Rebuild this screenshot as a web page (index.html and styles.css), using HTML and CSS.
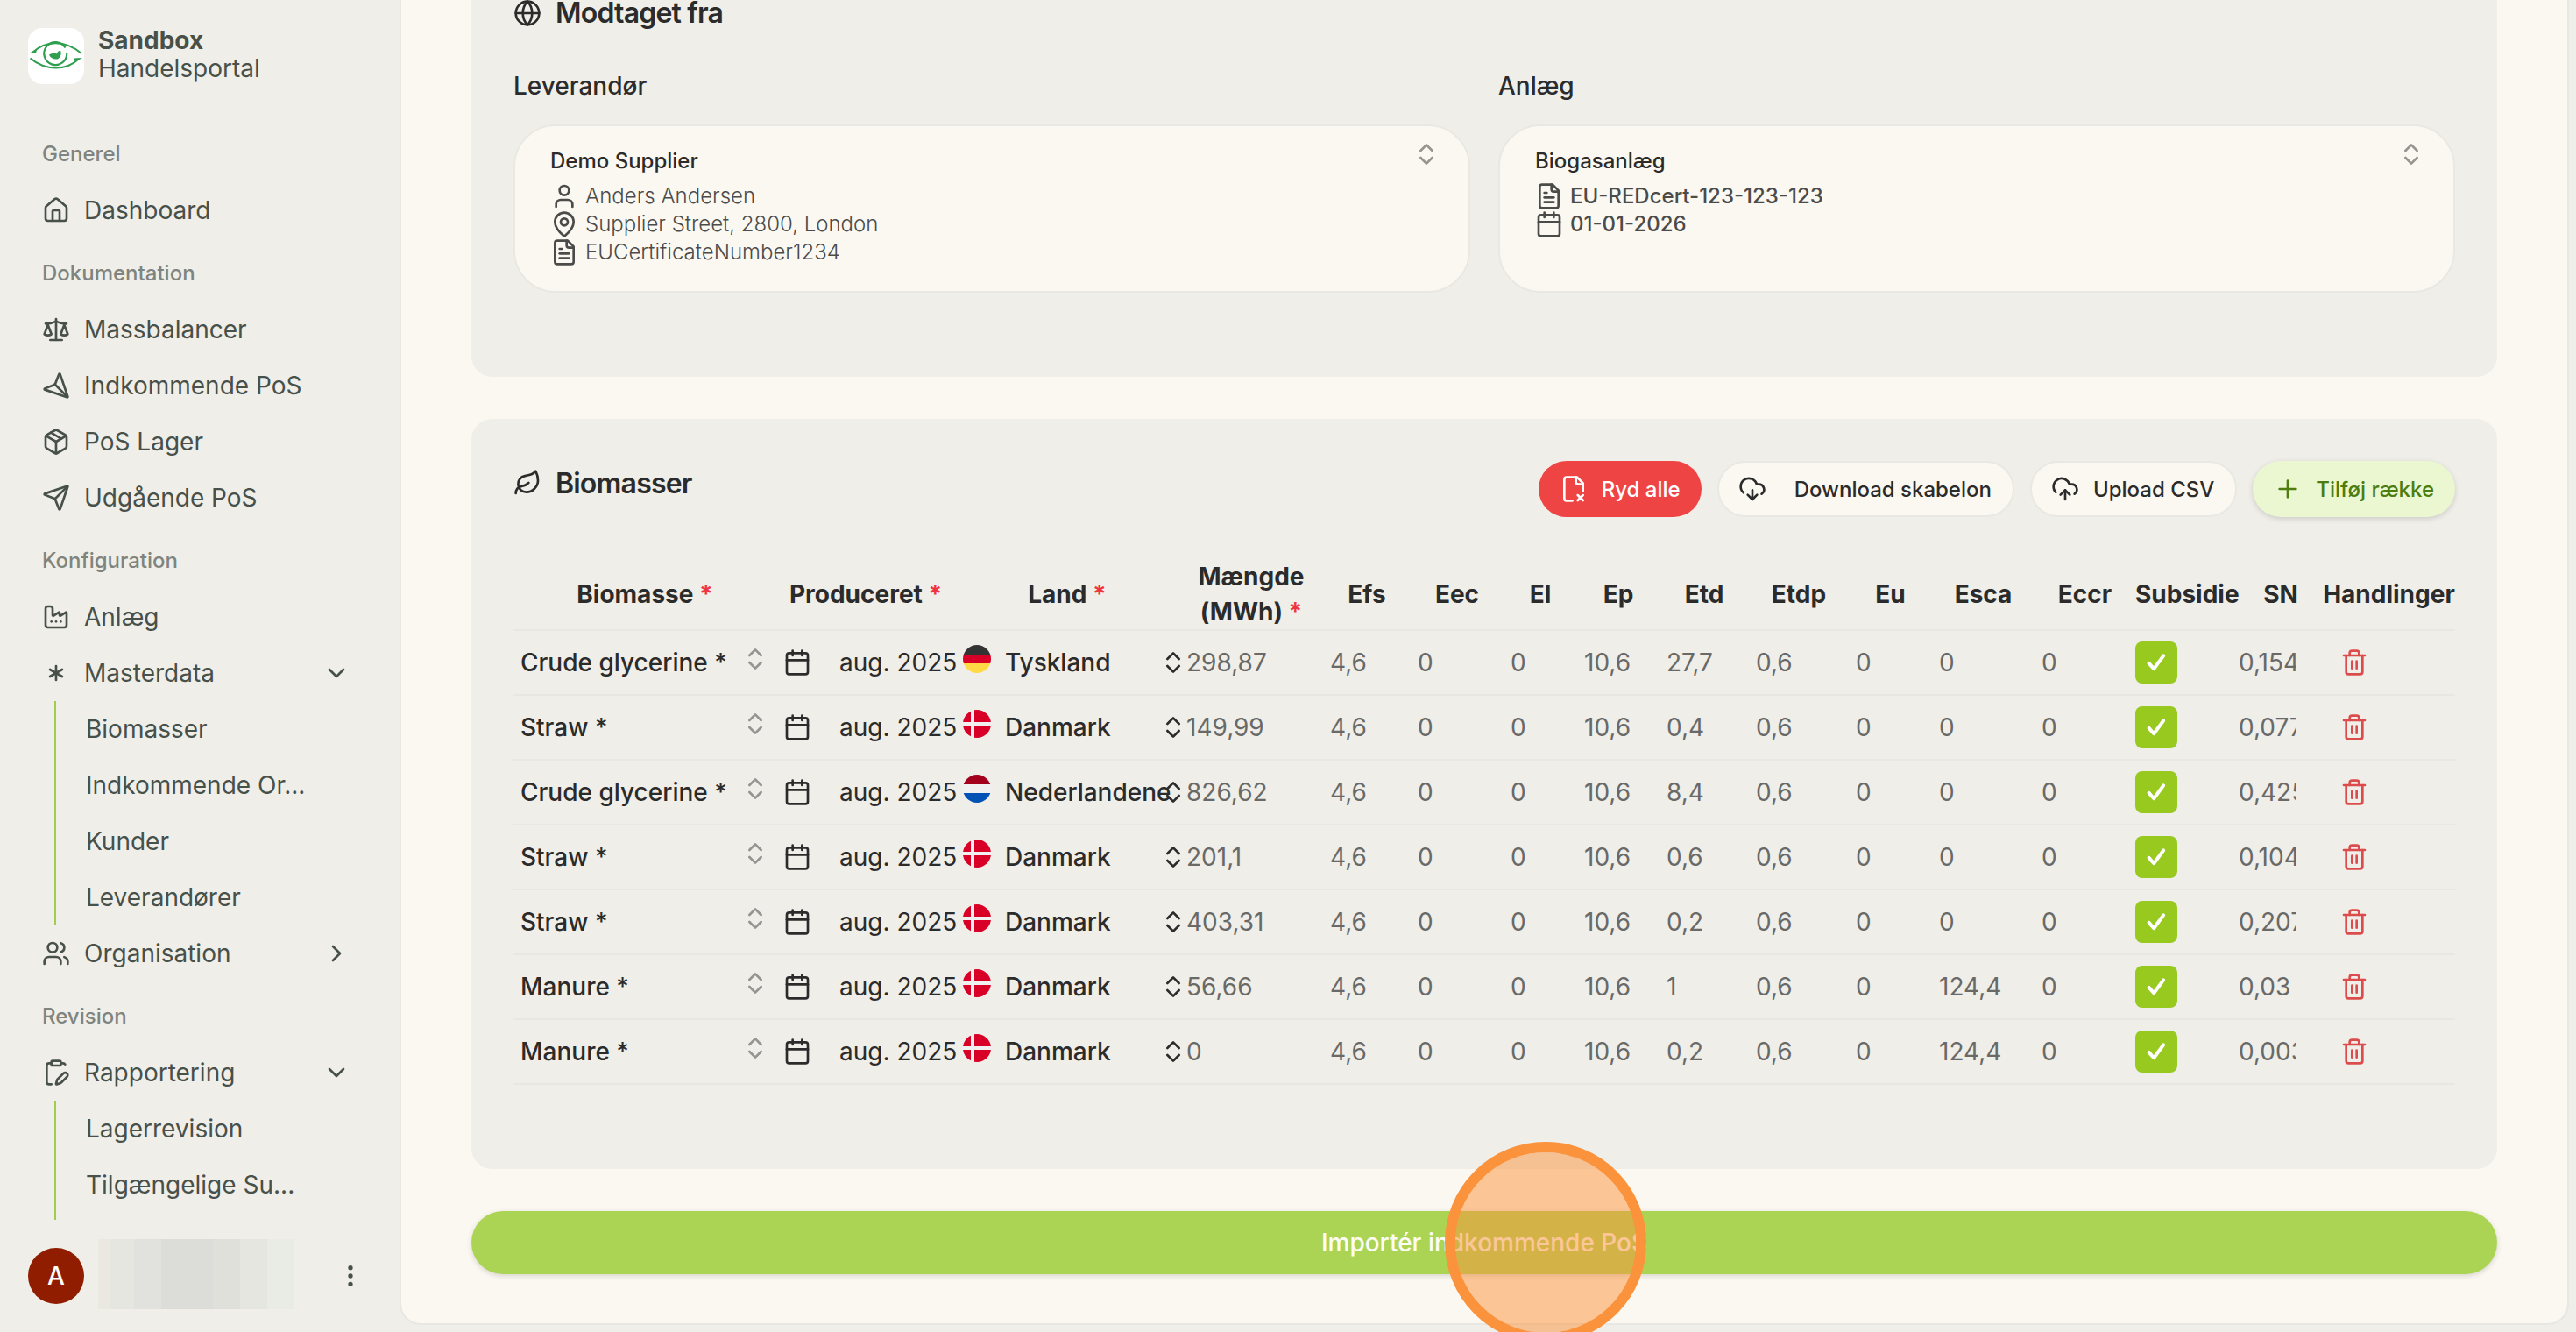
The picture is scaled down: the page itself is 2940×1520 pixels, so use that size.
FILE: index.html
```html
<!DOCTYPE html>
<html lang="da">

<head>
    <meta charset="UTF-8">
    <meta name="viewport" content="width=device-width, initial-scale=1.0">
    <title>Sandbox Handelsportal</title>
    <link rel="stylesheet" href="styles.css">
</head>

<body>
    <!-- Icon sprite -->
    <svg class="sprite">
        <symbol id="house" viewBox="0 0 24 24"><path d="M15 21v-8a1 1 0 0 0-1-1h-4a1 1 0 0 0-1 1v8"/><path d="M3 10a2 2 0 0 1 .709-1.528l7-5.999a2 2 0 0 1 2.582 0l7 5.999A2 2 0 0 1 21 10v9a2 2 0 0 1-2 2H5a2 2 0 0 1-2-2z"/></symbol>
        <symbol id="scale" viewBox="0 0 24 24"><path d="m16 16 3-8 3 8c-.87.65-1.92 1-3 1s-2.13-.35-3-1Z"/><path d="m2 16 3-8 3 8c-.87.65-1.92 1-3 1s-2.13-.35-3-1Z"/><path d="M7 21h10"/><path d="M12 3v18"/><path d="M3 7h2c2 0 5-1 7-2 2 1 5 2 7 2h2"/></symbol>
        <symbol id="send" viewBox="0 0 24 24"><path d="M14.536 21.686a.5.5 0 0 0 .937-.024l6.5-19a.496.496 0 0 0-.635-.635l-19 6.5a.5.5 0 0 0-.024.937l7.93 3.18a2 2 0 0 1 1.112 1.11z"/><path d="m21.854 2.147-10.94 10.939"/></symbol>
        <symbol id="package" viewBox="0 0 24 24"><path d="M11 21.73a2 2 0 0 0 2 0l7-4A2 2 0 0 0 21 16V8a2 2 0 0 0-1-1.73l-7-4a2 2 0 0 0-2 0l-7 4A2 2 0 0 0 3 8v8a2 2 0 0 0 1 1.73z"/><path d="M12 22V12"/><path d="M3.29 7 12 12l8.71-5"/><path d="m7.5 4.27 9 5.15"/></symbol>
        <symbol id="factory" viewBox="0 0 24 24"><path d="M12 16h.01"/><path d="M16 16h.01"/><path d="M8 16h.01"/><path d="M3 19a2 2 0 0 0 2 2h14a2 2 0 0 0 2-2V8.5a.5.5 0 0 0-.769-.422l-4.462 2.844A.5.5 0 0 1 15 10.5v-2a.5.5 0 0 0-.769-.422L9.77 10.922A.5.5 0 0 1 9 10.5V5a2 2 0 0 0-2-2H5a2 2 0 0 0-2 2z"/></symbol>
        <symbol id="asterisk" viewBox="0 0 24 24"><path d="M12 6v12"/><path d="M17.196 9 6.804 15"/><path d="m6.804 9 10.392 6"/></symbol>
        <symbol id="users" viewBox="0 0 24 24"><path d="M16 21v-2a4 4 0 0 0-4-4H6a4 4 0 0 0-4 4v2"/><circle cx="9" cy="7" r="4"/><path d="M22 21v-2a4 4 0 0 0-3-3.87"/><path d="M16 3.13a4 4 0 0 1 0 7.75"/></symbol>
        <symbol id="clipboard-pen" viewBox="0 0 24 24"><rect width="8" height="4" x="8" y="2" rx="1"/><path d="M16 4h2a2 2 0 0 1 1.73 1"/><path d="M8 4H6a2 2 0 0 0-2 2v14a2 2 0 0 0 2 2h2"/><path d="M21.34 15.664a1 1 0 1 0-3.004-3.004l-5.01 5.012a2 2 0 0 0-.506.854l-.837 2.87a.5.5 0 0 0 .62.62l2.87-.837a2 2 0 0 0 .854-.506z"/></symbol>
        <symbol id="chevron-down" viewBox="0 0 24 24"><path d="m6 9 6 6 6-6"/></symbol>
        <symbol id="chevron-right" viewBox="0 0 24 24"><path d="m9 18 6-6-6-6"/></symbol>
        <symbol id="chevrons" viewBox="0 0 24 24"><path d="m7 15 5 5 5-5"/><path d="m7 9 5-5 5 5"/></symbol>
        <symbol id="dots" viewBox="0 0 24 24"><circle cx="12" cy="12" r="1"/><circle cx="12" cy="5" r="1"/><circle cx="12" cy="19" r="1"/></symbol>
        <symbol id="globe" viewBox="0 0 24 24"><circle cx="12" cy="12" r="10"/><path d="M12 2a14.5 14.5 0 0 0 0 20 14.5 14.5 0 0 0 0-20"/><path d="M2 12h20"/></symbol>
        <symbol id="user" viewBox="0 0 24 24"><path d="M19 21v-2a4 4 0 0 0-4-4H9a4 4 0 0 0-4 4v2"/><circle cx="12" cy="7" r="4"/></symbol>
        <symbol id="pin" viewBox="0 0 24 24"><path d="M20 10c0 4.993-5.539 10.193-7.399 11.799a1 1 0 0 1-1.202 0C9.539 20.193 4 14.993 4 10a8 8 0 0 1 16 0"/><circle cx="12" cy="10" r="3"/></symbol>
        <symbol id="file-text" viewBox="0 0 24 24"><path d="M15 2H6a2 2 0 0 0-2 2v16a2 2 0 0 0 2 2h12a2 2 0 0 0 2-2V7Z"/><path d="M14 2v4a2 2 0 0 0 2 2h4"/><path d="M10 9H8"/><path d="M16 13H8"/><path d="M16 17H8"/></symbol>
        <symbol id="calendar" viewBox="0 0 24 24"><path d="M8 2v4"/><path d="M16 2v4"/><rect width="18" height="18" x="3" y="4" rx="2"/><path d="M3 10h18"/></symbol>
        <symbol id="leaf" viewBox="0 0 24 24"><path d="M11 20A7 7 0 0 1 9.8 6.1C15.5 5 17 4.48 19 2c1 2 2 4.18 2 8 0 5.5-4.78 10-10 10Z"/><path d="M2 21c0-3 1.85-5.36 5.08-6C9.5 14.52 12 13 13 12"/></symbol>
        <symbol id="file-x" viewBox="0 0 24 24"><path d="M11 22H6a2 2 0 0 1-2-2V4a2 2 0 0 1 2-2h9l5 5v7"/><path d="M14 2v4a2 2 0 0 0 2 2h4"/><path d="m15.5 17.3 4.5 4.5"/><path d="m20 17.3-4.5 4.5"/></symbol>
        <symbol id="cloud-down" viewBox="0 0 24 24"><path d="M12 13v8l-4-4"/><path d="m12 21 4-4"/><path d="M4.393 15.269A7 7 0 1 1 15.71 8h1.79a4.5 4.5 0 0 1 2.436 8.284"/></symbol>
        <symbol id="cloud-up" viewBox="0 0 24 24"><path d="M12 13v8"/><path d="M4 14.899A7 7 0 1 1 15.71 8h1.79a4.5 4.5 0 0 1 2.5 8.242"/><path d="m8 17 4-4 4 4"/></symbol>
        <symbol id="plus" viewBox="0 0 24 24"><path d="M5 12h14"/><path d="M12 5v14"/></symbol>
        <symbol id="check" viewBox="0 0 24 24"><path d="m4.8 12.8 4.8 5.4L19 5.4"/></symbol>
        <symbol id="trash" viewBox="0 0 24 24"><path d="M3 6h18"/><path d="M19 6v14a2 2 0 0 1-2 2H7a2 2 0 0 1-2-2V6"/><path d="M8 6V4a2 2 0 0 1 2-2h4a2 2 0 0 1 2 2v2"/><path d="M10 11v6"/><path d="M14 11v6"/></symbol>
    </svg>

    <div class="app">
        <aside class="sidebar">
            <div class="brand">
                <svg class="logo" viewBox="0 0 64 64">
                    <path class="stroke" d="M5 28C20 14 42 13 61 29"/>
                    <path class="fill" d="M1.5 28.5 10 24.5 9 29Z"/>
                    <path class="stroke" d="M2.5 34.5C20 49 44 49 58 35"/>
                    <path class="fill" d="M52 34.5 62 34 54 38.5Z"/>
                    <path class="stroke" d="M42.5 22.5A13 13 0 1 0 44.3 29"/>
                    <path class="fill" d="M24 30.5C27 28.5 31 28 32.5 29.5 33.5 27 35 26 37 25.5 38.5 29 37.5 34 33.5 35.5 29.5 36 25.5 34.5 24 30.5Z"/>
                </svg>
                <div class="brand-text">
                    <strong>Sandbox</strong>
                    <span>Handelsportal</span>
                </div>
            </div>

            <nav class="nav">
                <div class="nav-group">
                    <h4>Generel</h4>
                    <a class="nav-item"><svg class="icon"><use href="#house"/></svg>Dashboard</a>
                </div>
                <div class="nav-group">
                    <h4>Dokumentation</h4>
                    <a class="nav-item"><svg class="icon"><use href="#scale"/></svg>Massbalancer</a>
                    <a class="nav-item"><svg class="icon incoming"><use href="#send"/></svg>Indkommende PoS</a>
                    <a class="nav-item"><svg class="icon"><use href="#package"/></svg>PoS Lager</a>
                    <a class="nav-item"><svg class="icon"><use href="#send"/></svg>Udgående PoS</a>
                </div>
                <div class="nav-group">
                    <h4>Konfiguration</h4>
                    <a class="nav-item"><svg class="icon"><use href="#factory"/></svg>Anlæg</a>
                    <a class="nav-item"><svg class="icon"><use href="#asterisk"/></svg>Masterdata<svg class="icon toggle"><use href="#chevron-down"/></svg></a>
                    <div class="nav-sub">
                        <a>Biomasser</a>
                        <a>Indkommende Or...</a>
                        <a>Kunder</a>
                        <a>Leverandører</a>
                    </div>
                    <a class="nav-item"><svg class="icon"><use href="#users"/></svg>Organisation<svg class="icon toggle"><use href="#chevron-right"/></svg></a>
                </div>
                <div class="nav-group">
                    <h4>Revision</h4>
                    <a class="nav-item"><svg class="icon"><use href="#clipboard-pen"/></svg>Rapportering<svg class="icon toggle"><use href="#chevron-down"/></svg></a>
                    <div class="nav-sub last">
                        <a>Lagerrevision</a>
                        <a>Tilgængelige Su...</a>
                    </div>
                </div>
            </nav>

            <div class="account">
                <div class="avatar">A</div>
                <div class="account-name"><i></i><i></i><i></i><i></i><i></i><i></i><i></i></div>
                <svg class="icon"><use href="#dots"/></svg>
            </div>
        </aside>

        <main class="main">
            <section class="card received">
                <h2><svg class="icon"><use href="#globe"/></svg>Modtaget fra</h2>
                <div class="fields">
                    <div class="field">
                        <label>Leverandør</label>
                        <div class="select-box">
                            <b>Demo Supplier</b>
                            <p><svg class="icon"><use href="#user"/></svg>Anders Andersen</p>
                            <p><svg class="icon"><use href="#pin"/></svg>Supplier Street, 2800, London</p>
                            <p><svg class="icon"><use href="#file-text"/></svg>EUCertificateNumber1234</p>
                            <svg class="icon select-arrow"><use href="#chevrons"/></svg>
                        </div>
                    </div>
                    <div class="field">
                        <label>Anlæg</label>
                        <div class="select-box plant">
                            <b>Biogasanlæg</b>
                            <p><svg class="icon"><use href="#file-text"/></svg>EU-REDcert-123-123-123</p>
                            <p><svg class="icon"><use href="#calendar"/></svg>01-01-2026</p>
                            <svg class="icon select-arrow"><use href="#chevrons"/></svg>
                        </div>
                    </div>
                </div>
            </section>

            <section class="card biomass">
                <div class="card-head">
                    <h2><svg class="icon"><use href="#leaf"/></svg>Biomasser</h2>
                    <div class="actions">
                        <button class="btn danger"><svg class="icon"><use href="#file-x"/></svg>Ryd alle</button>
                        <button class="btn outline wide"><svg class="icon"><use href="#cloud-down"/></svg>Download skabelon</button>
                        <button class="btn outline"><svg class="icon"><use href="#cloud-up"/></svg>Upload CSV</button>
                        <button class="btn add"><svg class="icon"><use href="#plus"/></svg>Tilføj række</button>
                    </div>
                </div>

                <table>
                    <colgroup>
                        <col class="c-biomass"><col class="c-date"><col class="c-country"><col class="c-amount">
                        <col class="c-efs"><col class="c-eec"><col class="c-el"><col class="c-ep"><col class="c-etd"><col class="c-etdp">
                        <col class="c-eu"><col class="c-esca"><col class="c-eccr"><col class="c-sub"><col class="c-sn"><col class="c-act">
                    </colgroup>
                    <thead>
                        <tr>
                            <th>Biomasse <em>*</em></th>
                            <th>Produceret <em>*</em></th>
                            <th>Land <em>*</em></th>
                            <th>Mængde (MWh) <em>*</em></th>
                            <th>Efs</th>
                            <th>Eec</th>
                            <th>El</th>
                            <th>Ep</th>
                            <th>Etd</th>
                            <th>Etdp</th>
                            <th>Eu</th>
                            <th>Esca</th>
                            <th>Eccr</th>
                            <th>Subsidie</th>
                            <th>SN</th>
                            <th>Handlinger</th>
                        </tr>
                    </thead>
                    <tbody>
                        <tr>
                            <td><div class="pick">Crude glycerine *<svg class="icon"><use href="#chevrons"/></svg></div></td>
                            <td><div class="date"><svg class="icon"><use href="#calendar"/></svg>aug. 2025</div></td>
                            <td><div class="country"><i class="flag de"></i><span>Tyskland</span><svg class="icon"><use href="#chevrons"/></svg></div></td>
                            <td>298,87</td><td>4,6</td><td>0</td><td>0</td><td>10,6</td><td>27,7</td><td>0,6</td><td>0</td><td>0</td><td>0</td>
                            <td><span class="checkbox"><svg class="icon"><use href="#check"/></svg></span></td>
                            <td><div class="sn">0,154</div></td>
                            <td><svg class="icon trash"><use href="#trash"/></svg></td>
                        </tr>
                        <tr>
                            <td><div class="pick">Straw *<svg class="icon"><use href="#chevrons"/></svg></div></td>
                            <td><div class="date"><svg class="icon"><use href="#calendar"/></svg>aug. 2025</div></td>
                            <td><div class="country"><i class="flag dk"></i><span>Danmark</span><svg class="icon"><use href="#chevrons"/></svg></div></td>
                            <td>149,99</td><td>4,6</td><td>0</td><td>0</td><td>10,6</td><td>0,4</td><td>0,6</td><td>0</td><td>0</td><td>0</td>
                            <td><span class="checkbox"><svg class="icon"><use href="#check"/></svg></span></td>
                            <td><div class="sn">0,077</div></td>
                            <td><svg class="icon trash"><use href="#trash"/></svg></td>
                        </tr>
                        <tr>
                            <td><div class="pick">Crude glycerine *<svg class="icon"><use href="#chevrons"/></svg></div></td>
                            <td><div class="date"><svg class="icon"><use href="#calendar"/></svg>aug. 2025</div></td>
                            <td><div class="country"><i class="flag nl"></i><span>Nederlandene</span><svg class="icon"><use href="#chevrons"/></svg></div></td>
                            <td>826,62</td><td>4,6</td><td>0</td><td>0</td><td>10,6</td><td>8,4</td><td>0,6</td><td>0</td><td>0</td><td>0</td>
                            <td><span class="checkbox"><svg class="icon"><use href="#check"/></svg></span></td>
                            <td><div class="sn">0,425</div></td>
                            <td><svg class="icon trash"><use href="#trash"/></svg></td>
                        </tr>
                        <tr>
                            <td><div class="pick">Straw *<svg class="icon"><use href="#chevrons"/></svg></div></td>
                            <td><div class="date"><svg class="icon"><use href="#calendar"/></svg>aug. 2025</div></td>
                            <td><div class="country"><i class="flag dk"></i><span>Danmark</span><svg class="icon"><use href="#chevrons"/></svg></div></td>
                            <td>201,1</td><td>4,6</td><td>0</td><td>0</td><td>10,6</td><td>0,6</td><td>0,6</td><td>0</td><td>0</td><td>0</td>
                            <td><span class="checkbox"><svg class="icon"><use href="#check"/></svg></span></td>
                            <td><div class="sn">0,104</div></td>
                            <td><svg class="icon trash"><use href="#trash"/></svg></td>
                        </tr>
                        <tr>
                            <td><div class="pick">Straw *<svg class="icon"><use href="#chevrons"/></svg></div></td>
                            <td><div class="date"><svg class="icon"><use href="#calendar"/></svg>aug. 2025</div></td>
                            <td><div class="country"><i class="flag dk"></i><span>Danmark</span><svg class="icon"><use href="#chevrons"/></svg></div></td>
                            <td>403,31</td><td>4,6</td><td>0</td><td>0</td><td>10,6</td><td>0,2</td><td>0,6</td><td>0</td><td>0</td><td>0</td>
                            <td><span class="checkbox"><svg class="icon"><use href="#check"/></svg></span></td>
                            <td><div class="sn">0,207</div></td>
                            <td><svg class="icon trash"><use href="#trash"/></svg></td>
                        </tr>
                        <tr>
                            <td><div class="pick">Manure *<svg class="icon"><use href="#chevrons"/></svg></div></td>
                            <td><div class="date"><svg class="icon"><use href="#calendar"/></svg>aug. 2025</div></td>
                            <td><div class="country"><i class="flag dk"></i><span>Danmark</span><svg class="icon"><use href="#chevrons"/></svg></div></td>
                            <td>56,66</td><td>4,6</td><td>0</td><td>0</td><td>10,6</td><td>1</td><td>0,6</td><td>0</td><td>124,4</td><td>0</td>
                            <td><span class="checkbox"><svg class="icon"><use href="#check"/></svg></span></td>
                            <td><div class="sn">0,03</div></td>
                            <td><svg class="icon trash"><use href="#trash"/></svg></td>
                        </tr>
                        <tr>
                            <td><div class="pick">Manure *<svg class="icon"><use href="#chevrons"/></svg></div></td>
                            <td><div class="date"><svg class="icon"><use href="#calendar"/></svg>aug. 2025</div></td>
                            <td><div class="country"><i class="flag dk"></i><span>Danmark</span><svg class="icon"><use href="#chevrons"/></svg></div></td>
                            <td>0</td><td>4,6</td><td>0</td><td>0</td><td>10,6</td><td>0,2</td><td>0,6</td><td>0</td><td>124,4</td><td>0</td>
                            <td><span class="checkbox"><svg class="icon"><use href="#check"/></svg></span></td>
                            <td><div class="sn">0,003</div></td>
                            <td><svg class="icon trash"><use href="#trash"/></svg></td>
                        </tr>
                    </tbody>
                </table>
            </section>

            <button class="import">Importér indkommende PoS</button>
        </main>
    </div>

    <!-- Click marker -->
    <div class="click-marker"></div>
</body>

</html>
```
FILE: styles.css
```css
* {
    box-sizing: border-box;
}
body {
    margin: 0;
    height: 1520px;
    overflow: hidden;
    background: #efeee9;
    font-family: Inter, "Liberation Sans", sans-serif;
    font-size: 28px;
    color: #2b2b2b;
}
h2, h4, p {
    margin: 0;
}
.sprite {
    display: none;
}
.icon {
    width: 32px;
    height: 32px;
    flex-shrink: 0;
    fill: none;
    stroke: currentColor;
    stroke-width: 2;
    stroke-linecap: round;
    stroke-linejoin: round;
}
.app {
    display: flex;
    height: 1520px;
}

/* Sidebar */
.sidebar {
    width: 456px;
    height: 1520px;
    display: flex;
    flex-direction: column;
    color: #48504a;
}
.brand {
    display: flex;
    gap: 16px;
    padding: 30px 32px 0;
    height: 144px;
}
.logo {
    width: 64px;
    height: 64px;
    margin-top: 2px;
    border-radius: 16px;
    background: #fff;
}
.logo .stroke {
    fill: none;
    stroke: #2f9e4f;
    stroke-width: 2.2;
}
.logo .fill {
    fill: #2f9e4f;
}
.brand-text {
    display: flex;
    flex-direction: column;
    line-height: 32px;
}
.nav {
    flex: 1;
    display: flex;
    flex-direction: column;
    gap: 8px;
}
.nav-group h4 {
    height: 64px;
    padding-left: 48px;
    line-height: 64px;
    font-size: 24px;
    font-weight: 500;
    color: #7f847e;
}
.nav-item {
    height: 64px;
    padding: 0 56px 0 48px;
    display: flex;
    align-items: center;
    gap: 16px;
}
.toggle {
    margin-left: auto;
}
.incoming {
    transform: rotate(90deg);
}
.nav-sub {
    margin-left: 62px;
    padding-left: 34px;
    border-left: 2px solid #a2cc4e;
}
.nav-sub a {
    display: block;
    height: 64px;
    line-height: 64px;
}
.nav-sub.last {
    padding-bottom: 8px;
}
.account {
    display: flex;
    align-items: center;
    height: 128px;
    padding: 0 40px 0 32px;
}
.avatar {
    width: 64px;
    height: 64px;
    border-radius: 50%;
    background: #901d00;
    color: #fff;
    font-weight: 500;
    line-height: 64px;
    text-align: center;
}
.account-name {
    display: flex;
    height: 80px;
    margin: -4px auto 0 16px;
}
.account-name i {
    width: 31px;
    background: #e1e2dd;
}
.account-name i:nth-child(1) {
    width: 14px;
    background: #ebe8e2;
}
.account-name i:nth-child(2) {
    width: 27px;
    background: #e6e6e1;
}
.account-name i:nth-child(4) {
    width: 59px;
    background: #dcddd8;
}
.account-name i:nth-child(5) {
    background: #dfe0da;
}
.account-name i:nth-child(6) {
    background: #e6e6e0;
}
.account-name i:nth-child(7) {
    background: #e9ebe5;
}

/* Main panel */
.main {
    width: 2476px;
    height: 1512px;
    padding: 0 80px;
    border: 2px solid #e8e7e2;
    border-top: 0;
    border-radius: 0 0 24px 24px;
    background: #fbf8f1;
}
.card {
    padding: 48px;
    border-radius: 24px;
    background: #efeee9;
}
.card h2 {
    display: flex;
    align-items: center;
    gap: 16px;
    font-size: 32px;
    font-weight: 600;
    letter-spacing: -0.8px;
}
.received {
    height: 430px;
    padding-top: 0;
    border-radius: 0 0 24px 24px;
}
.received h2 {
    height: 29px;
}
.fields {
    display: grid;
    grid-template-columns: 1fr 1fr;
    gap: 32px;
    margin-top: 49px;
}
.field label {
    display: block;
    margin-bottom: 24px;
    line-height: 40px;
    font-weight: 500;
}
.select-box {
    position: relative;
    height: 192px;
    padding: 24px 40px;
    border: 2px solid #e9e8e2;
    border-radius: 48px;
    background: #fbf8f1;
    font-size: 24px;
    line-height: 32px;
}
.select-box b {
    display: block;
    margin-bottom: 8px;
    font-weight: 500;
}
.select-box p {
    display: flex;
    gap: 8px;
    font-weight: 300;
    color: #4b4b4a;
}
.select-box.plant p {
    font-weight: 500;
}
.select-arrow {
    position: absolute;
    top: 16px;
    right: 32px;
    color: #959491;
}

.biomass {
    height: 856px;
    margin-top: 48px;
}
.card-head {
    display: flex;
    justify-content: space-between;
    align-items: flex-start;
    margin-bottom: 48px;
}
.card-head h2 {
    height: 50px;
}
.actions {
    display: flex;
    gap: 18px;
}
.btn {
    height: 64px;
    padding: 0 24px;
    display: flex;
    align-items: center;
    gap: 16px;
    border: 0;
    border-radius: 32px;
    font-family: inherit;
    font-size: 24px;
    font-weight: 500;
    color: #2b2b2b;
}
.danger {
    background: #ef4444;
    color: #fff;
}
.outline {
    padding: 0 24px 0 22px;
    border: 2px solid #e9e8e2;
    background: #fbf8f1;
}
.wide {
    gap: 32px;
}
.add {
    background: #ebf7d0;
    color: #4d7c0f;
    box-shadow: 0 2px 6px rgba(0, 0, 0, 0.15);
}

/* Biomass table */
table {
    width: 2216px;
    table-layout: fixed;
    border-collapse: separate;
    border-spacing: 0;
}
.c-biomass { width: 300px; }
.c-date { width: 204px; }
.c-country { width: 256px; }
.c-amount { width: 164px; }
.c-efs { width: 100px; }
.c-eec { width: 106px; }
.c-el { width: 84px; }
.c-ep { width: 94px; }
.c-etd { width: 102px; }
.c-etdp { width: 114px; }
.c-eu { width: 95px; }
.c-esca { width: 117px; }
.c-eccr { width: 115px; }
.c-sub { width: 118px; }
.c-sn { width: 96px; }
.c-act { width: 151px; }
th {
    height: 82px;
    padding: 0;
    border-bottom: 2px solid #e8e7e2;
    line-height: 40px;
    font-weight: 700;
    text-align: center;
}
th:nth-child(4) {
    padding: 0 20px;
}
th:nth-child(14),
th:last-child {
    white-space: nowrap;
}
th em {
    font-style: normal;
    color: #ef3340;
}
td {
    height: 74px;
    padding: 0 0 0 8px;
    border-bottom: 2px solid #e8e7e2;
    color: #696968;
    white-space: nowrap;
}
td:nth-child(-n+3) {
    color: #2b2b2b;
}
td:nth-child(3) {
    padding-left: 9px;
}
td:nth-child(n+14) {
    padding-left: 0;
}
.pick,
.date,
.country {
    display: flex;
    align-items: center;
}
.pick {
    justify-content: space-between;
    padding-right: 8px;
    font-weight: 500;
}
.pick .icon {
    margin-bottom: 8px;
    color: #959491;
}
.date {
    gap: 32px;
}
.country {
    gap: 16px;
    margin-right: -9px;
    font-weight: 500;
}
.country span {
    flex: 1;
    min-width: 0;
}
.flag {
    width: 32px;
    height: 32px;
    margin-bottom: 8px;
    border-radius: 50%;
}
.de {
    background: linear-gradient(#333 33%, #d80027 33% 67%, #ffda44 67%);
}
.dk {
    background: linear-gradient(90deg, transparent 28%, #f0f0f0 28% 41%, transparent 41%), linear-gradient(#d80027 44%, #f0f0f0 44% 56%, #d80027 56%);
}
.nl {
    background: linear-gradient(#a2001d 33%, #f0f0f0 33% 67%, #0052b4 67%);
}
.checkbox {
    width: 48px;
    height: 48px;
    display: flex;
    align-items: center;
    justify-content: center;
    border-radius: 8px;
    background: #98c91e;
    color: #fff;
}
.checkbox .icon {
    width: 28px;
    height: 28px;
    stroke-width: 3.4;
}
.sn {
    width: 66px;
    overflow: hidden;
}
.trash {
    display: block;
    margin-left: 20px;
    color: #dc4c4c;
}

.import {
    display: block;
    width: 100%;
    height: 72px;
    margin-top: 48px;
    border: 0;
    border-radius: 36px;
    background: #abd454;
    box-shadow: 0 2px 6px rgba(0, 0, 0, 0.15);
    font-family: inherit;
    font-size: 28px;
    font-weight: 500;
    color: #fdfcf5;
}
.click-marker {
    position: absolute;
    left: 1649px;
    top: 1303px;
    width: 230px;
    height: 230px;
    border: 12px solid #fb923c;
    border-radius: 50%;
    background: rgba(251, 146, 60, 0.5);
    background-clip: padding-box;
}
```
